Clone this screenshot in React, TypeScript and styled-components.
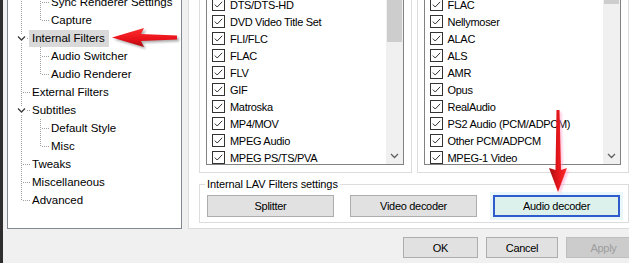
import React from "react";
import styled, { createGlobalStyle } from "styled-components";

const GlobalStyle = createGlobalStyle`
  html, body {
    margin: 0;
    padding: 0;
    background: #f0f0f0;
    overflow: hidden;
  }
  * {
    box-sizing: border-box;
  }
`;

const Screen = styled.div`
  position: relative;
  width: 629px;
  height: 263px;
  overflow: hidden;
`;

const Dialog = styled.div`
  width: 100%;
  height: 100%;
  display: flex;
  flex-direction: column;
  border-left: 3px solid #2e2e2e;
  background: #f0f0f0;
  font-family: "Liberation Sans", Arial, sans-serif;
  color: #000;
`;

const Body = styled.div`
  display: flex;
  height: 229px;
  gap: 6px;
  padding-left: 4px;
`;

/* ---------- tree ---------- */

const Tree = styled.div`
  width: 175px;
  height: 229px;
  flex-shrink: 0;
  background: #fff;
  border: 1px solid #828790;
  border-top: none;
  overflow: hidden;
  padding-left: 3px;
`;

const TreeRows = styled.div`
  margin-top: -7px;
  display: flex;
  flex-direction: column;
`;

const TreeRow = styled.div`
  display: flex;
  align-items: center;
  height: 18px;
`;

const CellSvg = styled.svg`
  display: block;
  flex-shrink: 0;
`;

const Label = styled.span<{ $selected?: boolean }>`
  height: 17px;
  line-height: 17px;
  padding: 0 4px 0 3px;
  margin-left: -1px;
  font-size: 11.5px;
  white-space: nowrap;
  background: ${(p) => (p.$selected ? "#d9d9d9" : "transparent")};
`;

type Conn = "pipe" | "tee" | "corner" | "open";

const Connector = ({ kind }: { kind: Conn }) => {
  const dots = { stroke: "#a0a0a0", strokeWidth: 1, strokeDasharray: "1 1", shapeRendering: "crispEdges" as const };
  return (
    <CellSvg width={19} height={18} viewBox="0 0 19 18">
      {kind === "pipe" && <line x1={10.5} y1={0} x2={10.5} y2={18} {...dots} />}
      {kind === "tee" && (
        <>
          <line x1={10.5} y1={0} x2={10.5} y2={18} {...dots} />
          <line x1={12} y1={9.5} x2={19} y2={9.5} {...dots} />
        </>
      )}
      {kind === "corner" && (
        <>
          <line x1={10.5} y1={0} x2={10.5} y2={10} {...dots} />
          <line x1={12} y1={9.5} x2={19} y2={9.5} {...dots} />
        </>
      )}
      {kind === "open" && (
        <>
          <line x1={10.5} y1={0} x2={10.5} y2={5} {...dots} />
          <line x1={10.5} y1={14} x2={10.5} y2={18} {...dots} />
          <line x1={16} y1={9.5} x2={19} y2={9.5} {...dots} />
          <path d="M7 7.5 L10.5 11 L14 7.5" fill="none" stroke="#3c3c3c" strokeWidth={1.3} />
        </>
      )}
    </CellSvg>
  );
};

const treeItems: { label: string; cells: Conn[]; selected?: boolean }[] = [
  { label: "Sync Renderer Settings", cells: ["pipe", "tee"] },
  { label: "Capture", cells: ["pipe", "corner"] },
  { label: "Internal Filters", cells: ["open"], selected: true },
  { label: "Audio Switcher", cells: ["pipe", "tee"] },
  { label: "Audio Renderer", cells: ["pipe", "corner"] },
  { label: "External Filters", cells: ["tee"] },
  { label: "Subtitles", cells: ["open"] },
  { label: "Default Style", cells: ["pipe", "tee"] },
  { label: "Misc", cells: ["pipe", "corner"] },
  { label: "Tweaks", cells: ["tee"] },
  { label: "Miscellaneous", cells: ["tee"] },
  { label: "Advanced", cells: ["corner"] },
];

/* ---------- page ---------- */

const Page = styled.div`
  flex: 1;
  height: 229px;
  background: #fff;
  border-left: 1px solid #dadada;
  border-bottom: 1px solid #dadada;
  padding: 0 0 0 10px;
  display: flex;
  flex-direction: column;
  margin-right: -2px;
`;

const ListsRow = styled.div`
  display: flex;
  gap: 5px;
  height: 173px;
  padding-right: 2px;
`;

const GroupBox = styled.div<{ $padLeft: number }>`
  flex: 1;
  border: 1px solid #dcdcdc;
  border-top: none;
  padding: 0 7px 7px ${(p) => p.$padLeft}px;
  display: flex;
`;

const ListBox = styled.div`
  flex: 1;
  border: 1px solid #828282;
  border-top: none;
  display: flex;
  overflow: hidden;
`;

const ListItems = styled.div`
  flex: 1;
  padding-left: 5px;
  margin-top: -4px;
  display: flex;
  flex-direction: column;
`;

const ListRow = styled.div`
  display: flex;
  align-items: center;
  gap: 5px;
  height: 17px;
  flex-shrink: 0;
  font-size: 11px;
  letter-spacing: -0.3px;
  white-space: nowrap;
`;

const CheckBox = styled.svg`
  display: block;
  flex-shrink: 0;
`;

const Check = () => (
  <CheckBox width={13} height={13} viewBox="0 0 13 13">
    <rect x={0.5} y={0.5} width={12} height={12} fill="#fff" stroke="#333" />
    <path d="M2.8 6.6 L5.2 9 L10.2 3.8" fill="none" stroke="#333" strokeWidth={1} />
  </CheckBox>
);

const ScrollBar = styled.div`
  width: 17px;
  flex-shrink: 0;
  background: #f0f0f0;
  display: flex;
  flex-direction: column;
`;

const Thumb = styled.div<{ $h: number }>`
  height: ${(p) => p.$h}px;
  margin: 0 1px;
  background: #cdcdcd;
`;

const Track = styled.div`
  flex: 1;
`;

const ArrowBtn = styled.div`
  height: 17px;
  display: flex;
  align-items: center;
  justify-content: center;
`;

const ScrollDown = ({ thumb }: { thumb: number }) => (
  <ScrollBar>
    <Thumb $h={thumb} />
    <Track />
    <ArrowBtn>
      <svg width={9} height={6} viewBox="0 0 9 6">
        <path d="M1 1 L4.5 4.5 L8 1" fill="none" stroke="#606060" strokeWidth={1.3} />
      </svg>
    </ArrowBtn>
  </ScrollBar>
);

const leftList = [
  "DTS/DTS-HD",
  "DVD Video Title Set",
  "FLI/FLC",
  "FLAC",
  "FLV",
  "GIF",
  "Matroska",
  "MP4/MOV",
  "MPEG Audio",
  "MPEG PS/TS/PVA",
];

const rightList = [
  "FLAC",
  "Nellymoser",
  "ALAC",
  "ALS",
  "AMR",
  "Opus",
  "RealAudio",
  "PS2 Audio (PCM/ADPCM)",
  "Other PCM/ADPCM",
  "MPEG-1 Video",
];

const LavGroup = styled.fieldset`
  margin: 5px 2px 0 0;
  padding: 4px 8px 5px 7px;
  border: 1px solid #dcdcdc;
  height: 45px;
  min-width: 0;
`;

const Legend = styled.legend`
  padding: 0 2px;
  margin-left: -2px;
  font-size: 11px;
  line-height: 13px;
  letter-spacing: -0.1px;
`;

const ButtonGrid = styled.div`
  display: grid;
  grid-template-columns: repeat(3, 1fr);
  gap: 16px;
`;

const Button = styled.button<{ $focus?: boolean; $disabled?: boolean; $w?: number }>`
  height: ${(p) => (p.$w ? 21 : 22)}px;
  ${(p) => (p.$w ? `width: ${p.$w}px; flex-shrink: 0;` : "")}
  padding: 0;
  font-family: "Liberation Sans", Arial, sans-serif;
  font-size: 11px;
  letter-spacing: -0.3px;
  color: ${(p) => (p.$disabled ? "#9d9d9d" : "#000")};
  background: ${(p) => (p.$focus ? "#dcf1ec" : p.$disabled ? "#cccccc" : "#e1e1e1")};
  border: ${(p) => (p.$focus ? "2px solid #2f5ccc" : p.$disabled ? "1px solid #bfbfbf" : "1px solid #adadad")};
  box-shadow: ${(p) => (p.$focus ? "0 0 0 3px #e9f7fa" : "none")};
`;

const Footer = styled.div`
  flex: 1;
  display: flex;
  justify-content: flex-end;
  gap: 8px;
  padding-top: 8px;
  margin-right: -12px;
`;

/* ---------- overlay arrows ---------- */

const Overlay = styled.svg`
  position: absolute;
  left: 0;
  top: 0;
  pointer-events: none;
`;

const Arrows = () => (
  <Overlay width={629} height={263} viewBox="0 0 629 263">
    <defs>
      <filter id="sh" x="-20%" y="-20%" width="140%" height="140%">
        <feGaussianBlur stdDeviation="1.2" />
      </filter>
      <linearGradient id="redH" x1="0" y1="0" x2="0" y2="1">
        <stop offset="0" stopColor="#ff3030" />
        <stop offset="0.6" stopColor="#e8121a" />
        <stop offset="1" stopColor="#a80c10" />
      </linearGradient>
      <linearGradient id="redV" x1="0" y1="0" x2="1" y2="0">
        <stop offset="0" stopColor="#9c1010" />
        <stop offset="0.45" stopColor="#e0141a" />
        <stop offset="1" stopColor="#ff2a2a" />
      </linearGradient>
    </defs>
    <polygon
      points="114,39.5 146,30 143,36 179,37.5 179,41.5 143,43 146,49"
      fill="#707070"
      opacity={0.55}
      filter="url(#sh)"
    />
    <polygon points="112,37.5 144,28 141,34 177,35.5 177,39.5 141,41 144,47" fill="url(#redH)" />
    <polygon
      points="560,194 551,170 557,172 558.5,112 561.5,112 563,172 569,170"
      fill="#ff8fc0"
      opacity={0.5}
      filter="url(#sh)"
    />
    <polygon points="558,192 549,168 555.5,170 556.5,110 559.5,110 561,170 567,168" fill="url(#redV)" />
  </Overlay>
);

const App = () => {
  return (
    <Screen>
      <GlobalStyle />
      <Dialog>
        <Body>
          <Tree>
            <TreeRows>
              {treeItems.map((it) => (
                <TreeRow key={it.label}>
                  {it.cells.map((c, i) => (
                    <Connector key={i} kind={c} />
                  ))}
                  <Label $selected={it.selected}>{it.label}</Label>
                </TreeRow>
              ))}
            </TreeRows>
          </Tree>
          <Page>
            <ListsRow>
              <GroupBox $padLeft={6}>
                <ListBox>
                  <ListItems>
                    {leftList.map((l) => (
                      <ListRow key={l}>
                        <Check />
                        {l}
                      </ListRow>
                    ))}
                  </ListItems>
                  <ScrollDown thumb={42} />
                </ListBox>
              </GroupBox>
              <GroupBox $padLeft={6}>
                <ListBox>
                  <ListItems>
                    {rightList.map((l, i) => (
                      <ListRow key={l + i}>
                        <Check />
                        {l}
                      </ListRow>
                    ))}
                  </ListItems>
                  <ScrollDown thumb={4} />
                </ListBox>
              </GroupBox>
            </ListsRow>
            <LavGroup>
              <Legend>Internal LAV Filters settings</Legend>
              <ButtonGrid>
                <Button>Splitter</Button>
                <Button>Video decoder</Button>
                <Button $focus>Audio decoder</Button>
              </ButtonGrid>
            </LavGroup>
          </Page>
        </Body>
        <Footer>
          <Button $w={75}>OK</Button>
          <Button $w={72}>Cancel</Button>
          <Button $w={75} $disabled>
            Apply
          </Button>
        </Footer>
      </Dialog>
      <Arrows />
    </Screen>
  );
};

export default App;
